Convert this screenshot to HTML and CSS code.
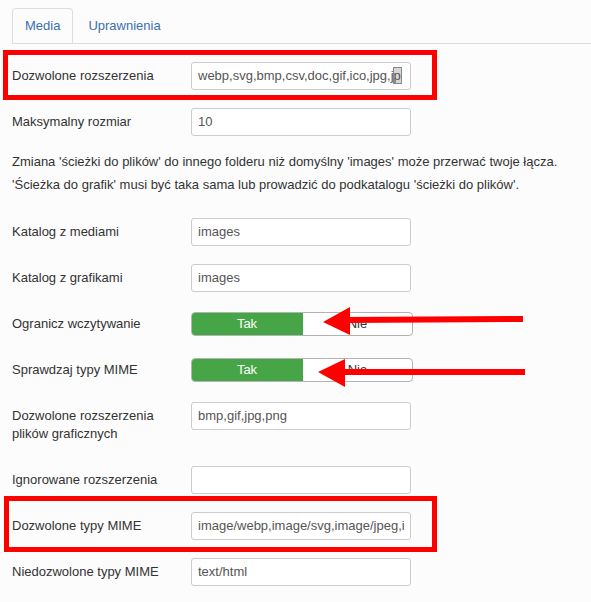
FILE: index.html
```html
<!DOCTYPE html>
<html lang="pl">
<head>
<meta charset="utf-8">
<title>Media</title>
<link rel="stylesheet" href="styles.css">
</head>
<body>
<div class="page">
  <ul class="tabs">
    <li class="tab active">Media</li>
    <li class="tab">Uprawnienia</li>
  </ul>

  <div class="row">
    <div class="label">Dozwolone rozszerzenia</div>
    <div class="input">webp,svg,bmp,csv,doc,gif,ico,jpg,j<span class="sel">p</span></div>
  </div>
  <div class="row">
    <div class="label">Maksymalny rozmiar</div>
    <div class="input">10</div>
  </div>
  <p class="note">Zmiana 'ścieżki do plików' do innego folderu niż domyślny 'images' może przerwać twoje łącza.<br>'Ścieżka do grafik' musi być taka sama lub prowadzić do podkatalogu 'ścieżki do plików'.</p>
  <div class="row">
    <div class="label">Katalog z mediami</div>
    <div class="input">images</div>
  </div>
  <div class="row">
    <div class="label">Katalog z grafikami</div>
    <div class="input">images</div>
  </div>
  <div class="row">
    <div class="label">Ogranicz wczytywanie</div>
    <div class="toggle"><span class="yes">Tak</span><span class="no">Nie</span></div>
  </div>
  <div class="row">
    <div class="label">Sprawdzaj typy MIME</div>
    <div class="toggle"><span class="yes">Tak</span><span class="no">Nie</span></div>
  </div>
  <div class="row">
    <div class="label">Dozwolone rozszerzenia<br>plików graficznych</div>
    <div class="input">bmp,gif,jpg,png</div>
  </div>
  <div class="row">
    <div class="label">Ignorowane rozszerzenia</div>
    <div class="input"></div>
  </div>
  <div class="row">
    <div class="label">Dozwolone typy MIME</div>
    <div class="input">image/webp,image/svg,image/jpeg,i</div>
  </div>
  <div class="row">
    <div class="label">Niedozwolone typy MIME</div>
    <div class="input">text/html</div>
  </div>

  <div class="mark mark-1"></div>
  <div class="mark mark-2"></div>
  <svg class="arrows" width="591" height="602" viewBox="0 0 591 602">
    <polygon fill="#ff0000" points="323,322 350,307 350,335"/>
    <polygon fill="#ff0000" points="345,317 523,316 523,322 345,323"/>
    <polygon fill="#ff0000" points="318,372 345,359 345,387"/>
    <polygon fill="#ff0000" points="340,369 525,369 525,375 340,375"/>
  </svg>
</div>
</body>
</html>
```

FILE: styles.css
```css
html, body {
  margin: 0;
  padding: 0;
  background: #fcfcfc;
}
.page {
  position: relative;
  width: 591px;
  height: 602px;
  overflow: hidden;
  padding: 8px 0 0 12px;
  box-sizing: border-box;
  font-family: "Liberation Sans", Arial, sans-serif;
  font-size: 13px;
  line-height: 18px;
  color: #333;
}
.tabs {
  list-style: none;
  margin: 0 0 18px 0;
  padding: 0;
  display: flex;
  border-bottom: 1px solid #ddd;
  height: 35px;
}
.tab {
  padding: 8px 12px;
  margin-right: 2px;
  border: 1px solid transparent;
  border-bottom: none;
  border-radius: 4px 4px 0 0;
  color: #3a6fb0;
  line-height: 18px;
}
.tab.active {
  border-color: #ddd;
  background: #fcfcfc;
  height: 35px;
  box-sizing: border-box;
  color: #3a6fb0;
  margin-bottom: -1px;
  padding-bottom: 9px;
}
.row {
  display: flex;
  align-items: flex-start;
  margin-bottom: 18px;
}
.label {
  width: 179px;
  padding: 5px 0;
  line-height: 18px;
}
.input {
  width: 220px;
  height: 28px;
  box-sizing: border-box;
  border: 1px solid #ccc;
  border-radius: 3px;
  background: #fff;
  color: #555;
  padding: 4px 6px;
  white-space: nowrap;
  overflow: hidden;
  line-height: 18px;
}
.sel {
  background: #d6d6d6;
  outline: 1px solid #888;
}
.note {
  margin: -4px 0 22px 0;
  line-height: 23px;
}
.toggle {
  display: flex;
  width: 222px;
  height: 24px;
  margin-top: 2px;
  box-sizing: border-box;
  border: 1px solid #b3b3b3;
  border-radius: 4px;
  overflow: hidden;
  background: #fff;
}
.toggle .yes {
  width: 112px;
  margin: -1px 0 -1px -1px;
  background: #46a546;
  color: #fff;
  text-align: center;
  line-height: 24px;
}
.toggle .no {
  flex: 1;
  text-align: center;
  line-height: 22px;
  color: #333;
}
.mark {
  position: absolute;
  border: 5px solid #ff0000;
  box-sizing: border-box;
}
.mark-1 {
  left: 3px;
  top: 50px;
  width: 434px;
  height: 50px;
}
.mark-2 {
  left: 4px;
  top: 496px;
  width: 433px;
  height: 56px;
}
.arrows {
  position: absolute;
  left: 0;
  top: 0;
}
```
